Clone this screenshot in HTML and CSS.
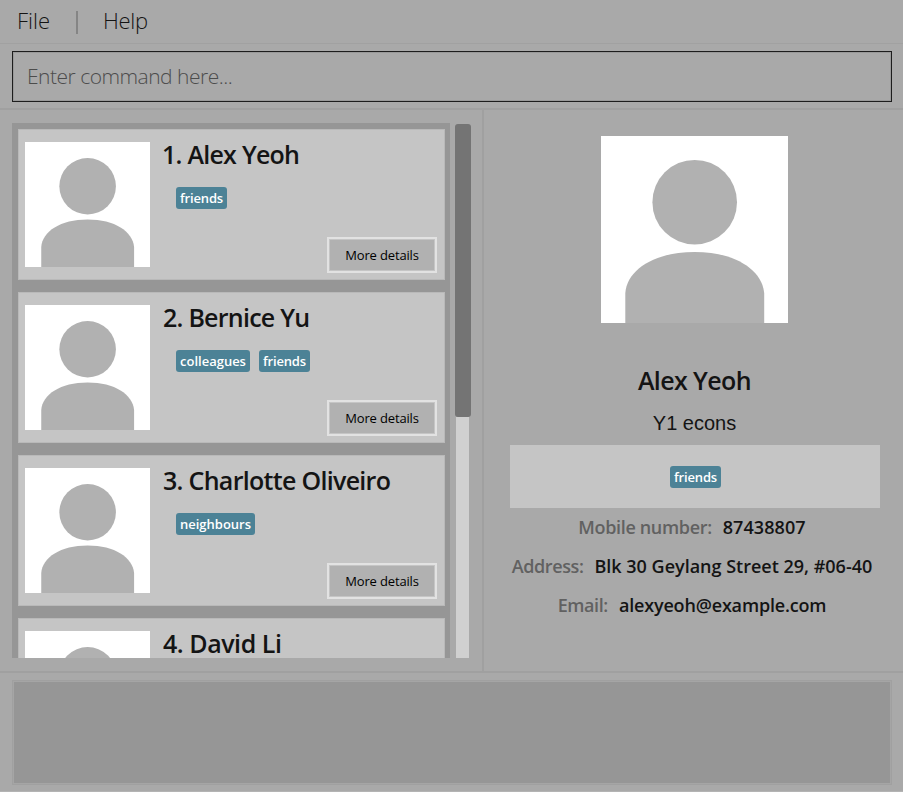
FILE: index.html
```html
<!DOCTYPE html>
<html lang="en">
<head>
<meta charset="utf-8">
<title>Contacts</title>
<link rel="stylesheet" href="styles.css">
</head>
<body>
<svg class="defs" aria-hidden="true">
  <symbol id="person" viewBox="0 0 187 187">
    <circle cx="93.7" cy="66.2" r="42.3"/>
    <path d="M24.3 187V157C26 134 53 116 93.7 116S161 134 163.2 157V187Z"/>
  </symbol>
</svg>
<nav class="menu"><span class="menu-file">File</span><i class="sep"></i><span class="menu-help">Help</span></nav>
<section class="command"><div class="input"><span class="prompt">Enter command here...</span></div></section>
<main class="main">
  <section class="list-pane">
    <div class="list">
      <article class="card">
        <svg class="photo"><use href="#person"/></svg>
        <div class="info"><h2><span class="n1">1. Alex Yeoh</span></h2><div class="tags"><b class="tag"><span class="friends">friends</span></b></div></div>
        <button class="more"><span>More details</span></button>
      </article>
      <article class="card">
        <svg class="photo"><use href="#person"/></svg>
        <div class="info"><h2><span class="n2">2. Bernice Yu</span></h2><div class="tags"><b class="tag"><span class="colleagues">colleagues</span></b><b class="tag"><span class="friends">friends</span></b></div></div>
        <button class="more"><span>More details</span></button>
      </article>
      <article class="card">
        <svg class="photo"><use href="#person"/></svg>
        <div class="info"><h2><span class="n3">3. Charlotte Oliveiro</span></h2><div class="tags"><b class="tag"><span class="neighbours">neighbours</span></b></div></div>
        <button class="more"><span>More details</span></button>
      </article>
      <article class="card">
        <svg class="photo"><use href="#person"/></svg>
        <div class="info"><h2><span class="n4">4. David Li</span></h2></div>
      </article>
    </div>
    <div class="scrollbar"><div class="thumb"></div><div class="track"></div></div>
  </section>
  <section class="details">
    <svg class="portrait"><use href="#person"/></svg>
    <h1><span class="dname">Alex Yeoh</span></h1>
    <p class="note"><span>Y1 econs</span></p>
    <div class="tagbox"><b class="tag"><span class="friends">friends</span></b></div>
    <p class="row"><span class="label l1">Mobile number:</span><span class="v1">87438807</span></p>
    <p class="row"><span class="label l2">Address:</span><span class="v2">Blk 30 Geylang Street 29, #06-40</span></p>
    <p class="row"><span class="label l3">Email:</span><span class="v3">alexyeoh@example.com</span></p>
  </section>
</main>
<footer class="result"><div class="output"></div></footer>
</body>
</html>
```

FILE: styles.css
```css
* { box-sizing: border-box; }
body { margin: 0; width: 903px; height: 792px; overflow: hidden; display: flex; flex-direction: column; background: #a9a9a9; border-bottom: 1px solid #b4b4b4; font-family: "Open Sans", "Noto Sans", sans-serif; color: #141414; }
h1, h2, p { margin: 0; font-weight: 600; }
span { white-space: nowrap; }
.defs { position: absolute; width: 0; height: 0; }
.menu { height: 44px; flex: none; display: flex; align-items: center; padding: 0 0 4px 17px; border-bottom: 1px solid #a1a1a1; font-size: 22px; font-weight: 300; }
.menu-file { width: 33px; }
.menu-help { letter-spacing: -.3px; }
.sep { width: 2px; height: 23px; background: #858585; margin: 6px 25px 0 26px; }
.command { height: 66px; flex: none; padding: 7px 11px 0 12px; border-bottom: 2px solid #a0a0a0; }
.input { height: 51px; border: 1px solid #1d1d1d; display: flex; align-items: center; padding: 0 0 2px 14px; font-size: 21px; font-weight: 300; color: #4c4c4c; box-shadow: inset 0 0 0 1px #999; }
.prompt { letter-spacing: -.5px; }
.main { height: 563px; flex: none; display: flex; border-bottom: 2px solid #a0a0a0; }
.list-pane { width: 484px; display: flex; padding: 13px 0 13px 12px; border-right: 2px solid #a0a0a0; }
.list { width: 438px; background: #969696; padding: 6px 5px 0 6px; display: flex; flex-direction: column; gap: 12px; overflow: hidden; }
.card { height: 151px; flex: none; display: flex; background: #c5c5c5; border: 1px solid #b9b9b9; padding: 12px 7px 6px 6px; }
.photo { width: 125px; height: 125px; flex: none; background: #fff; fill: #b1b1b1; }
.portrait { width: 187px; height: 187px; flex: none; background: #fff; fill: #b1b1b1; }
.info { width: 0; flex: 1; padding-left: 12px; }
h2 { font-size: 25px; line-height: 25px; height: 45px; padding-left: 1px; }
.n1 { letter-spacing: -.74px; margin-left: -1px; }
.n2 { letter-spacing: -.75px; }
.n3 { letter-spacing: -.7px; }
.n4 { letter-spacing: -.45px; }
.tags { display: flex; gap: 9px; padding-left: 14px; }
.tag { height: 22px; display: flex; align-items: center; padding: 0 4px; border-radius: 3px; background: #4c8296; color: #fff; font-size: 13px; font-weight: 600; }
.friends { letter-spacing: -.16px; }
.more { align-self: flex-end; width: 110px; height: 36px; padding: 0; border: 2px solid #e2e2e2; background: #b1b1b1; box-shadow: inset 0 0 0 1px #c5c5c5; color: #000; font: 400 13px "Open Sans", sans-serif; letter-spacing: -.15px; }
.scrollbar { width: 16px; margin-left: 5px; padding-top: 1px; display: flex; flex-direction: column; }
.thumb { height: 293px; background: #747474; border-radius: 3px; }
.track { flex: 1; width: 13px; margin-left: 1px; background: #d0d0d0; }
.details { flex: 1; display: flex; flex-direction: column; align-items: center; padding: 26px 0 0 2px; }
h1 { font-size: 25px; line-height: 34px; margin-top: 40px; }
.dname { letter-spacing: -.6px; }
.note { font: 400 20px/24px "Liberation Sans", sans-serif; margin-top: 14px; }
.tagbox { width: 370px; height: 63px; margin-top: 10px; padding-left: 2px; background: #c5c5c5; display: flex; align-items: center; justify-content: center; }
.row { height: 39px; display: flex; align-items: center; gap: 11px; font-size: 18px; padding: 0 5px 2px 0; }
.label { color: #616161; }
.l1 { letter-spacing: -.34px; }
.v1 { letter-spacing: .08px; }
.l2 { letter-spacing: -.4px; }
.l3 { letter-spacing: -.4px; }
.v3 { letter-spacing: -.17px; }
.result { padding: 7px 11px 0 12px; }
.output { height: 105px; background: #969696; border: 1px solid #a0a0a0; box-shadow: inset 0 0 0 1px #a5a5a5; }
```
